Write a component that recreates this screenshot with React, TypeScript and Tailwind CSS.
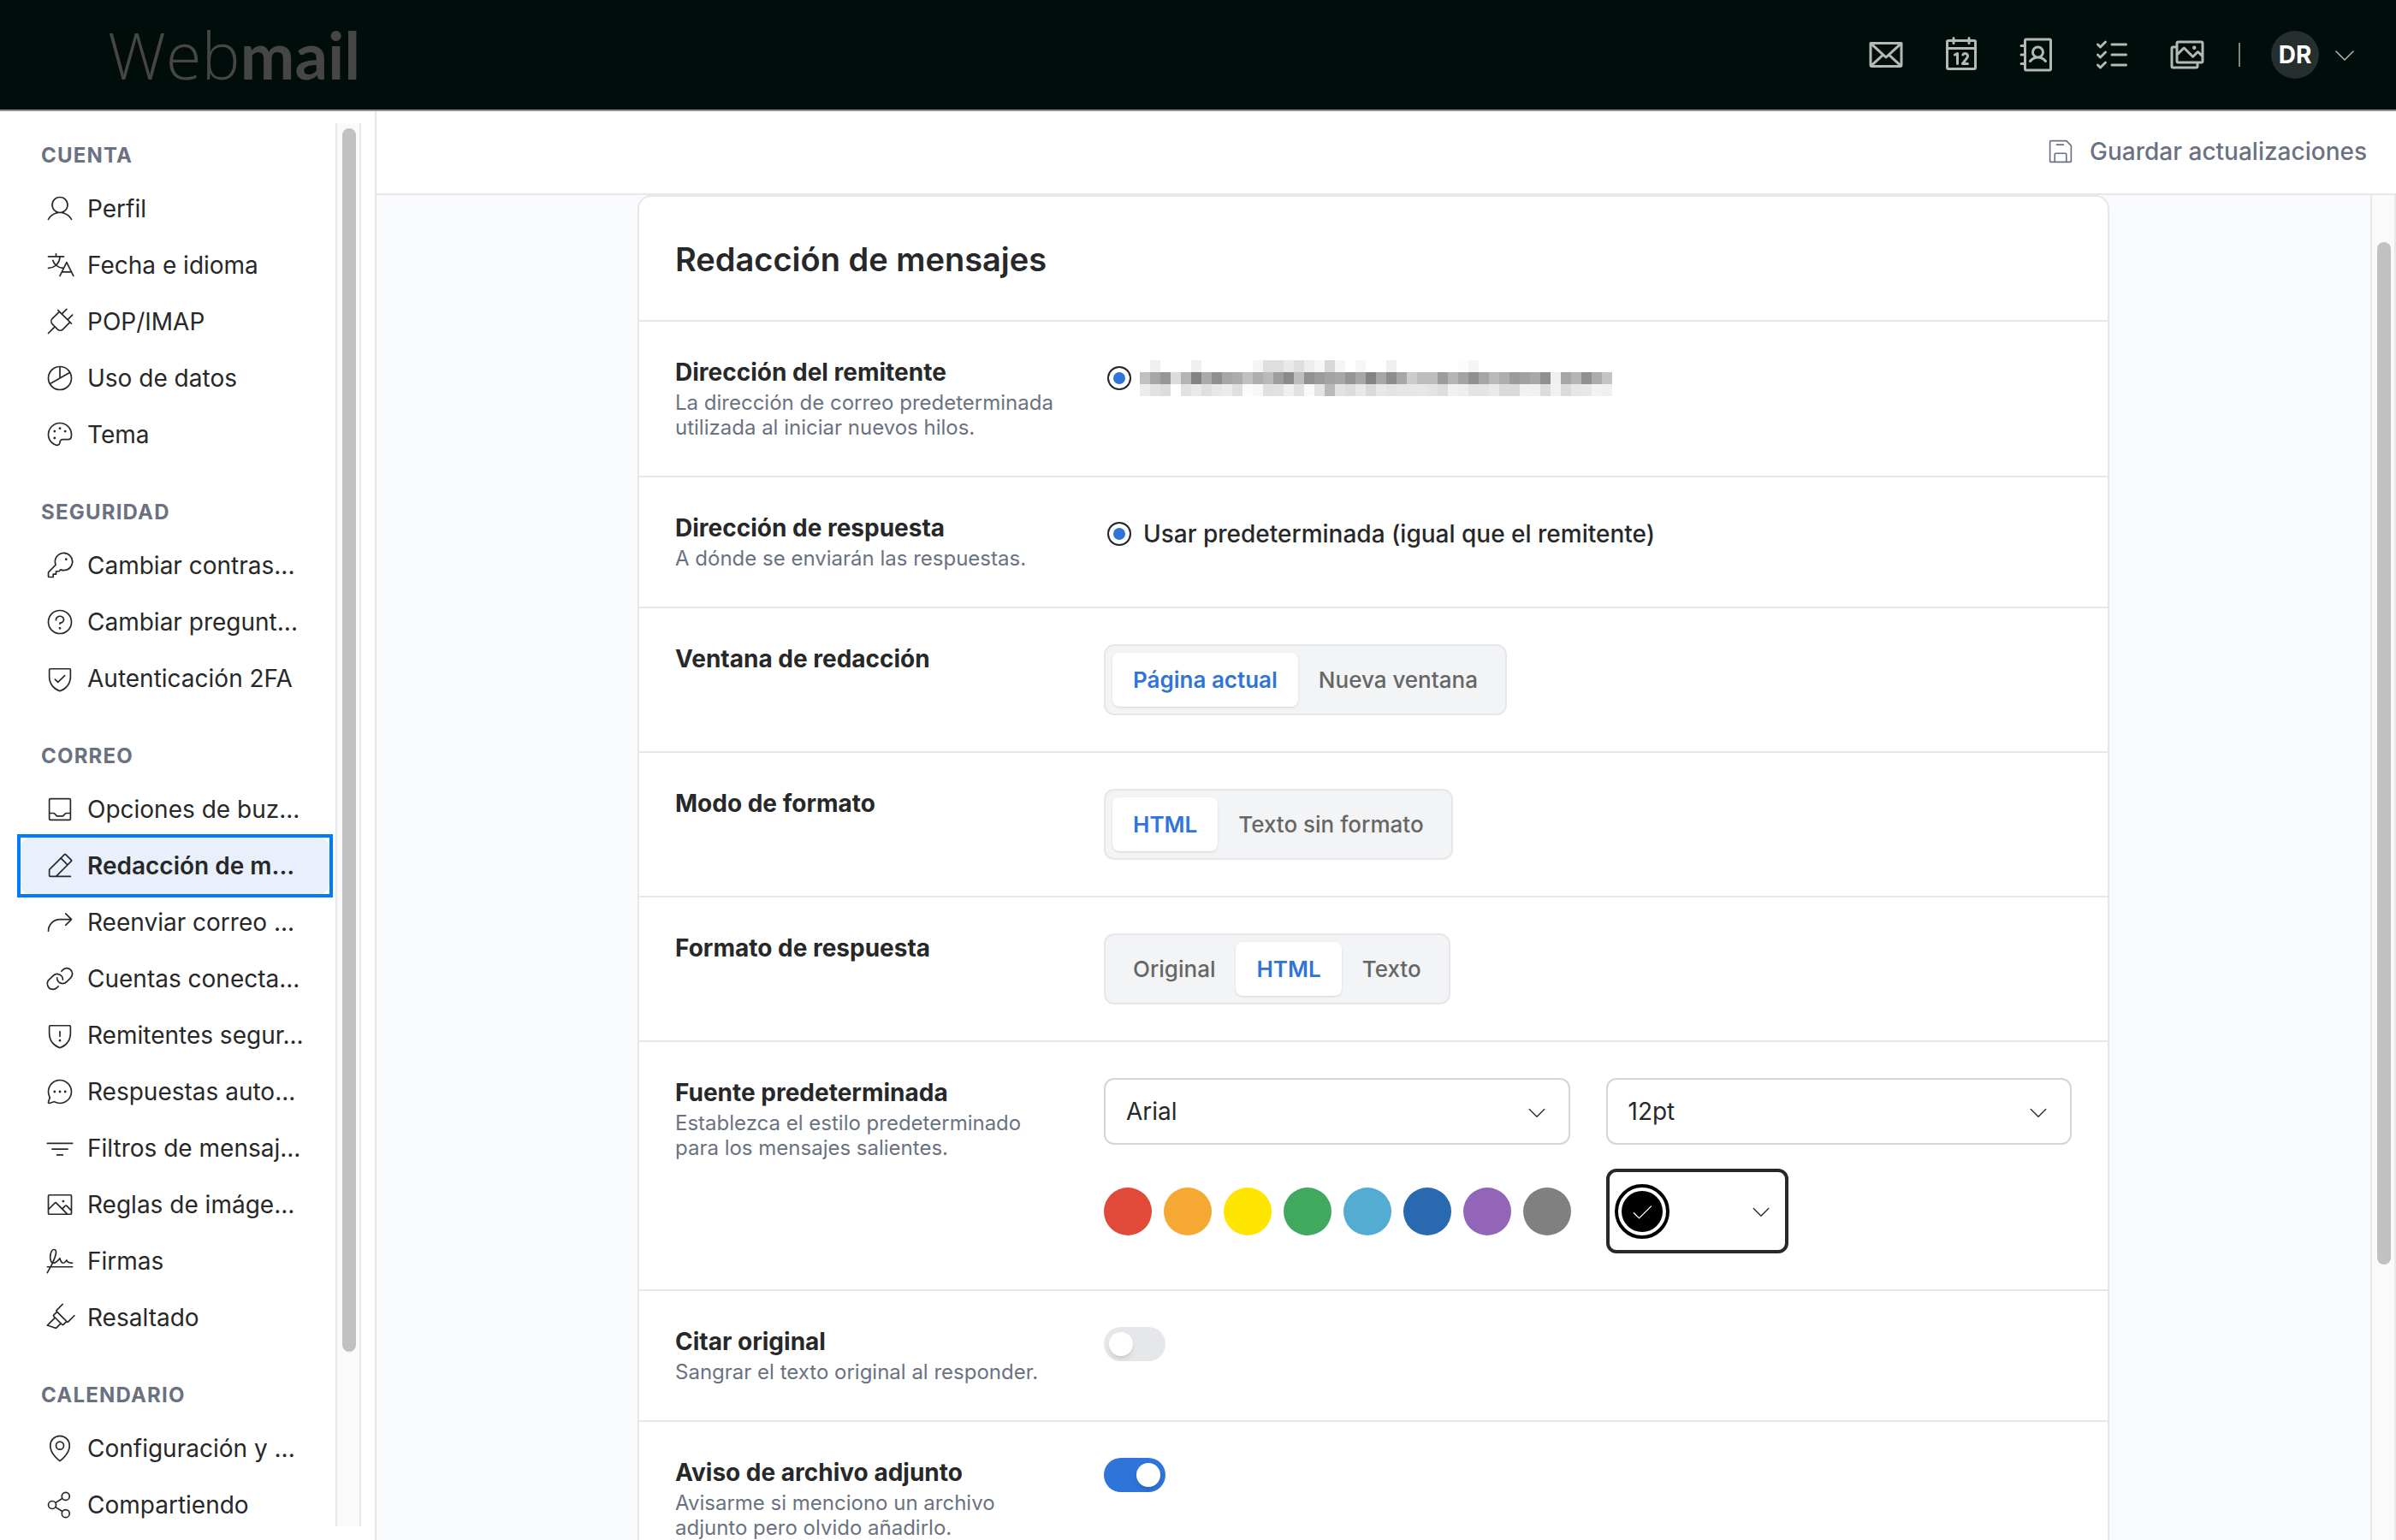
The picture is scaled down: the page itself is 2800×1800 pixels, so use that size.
import React, { useState } from 'react';
import type { IconType } from 'react-icons';
import {
  PiAddressBook,
  PiArrowBendUpRightLight,
  PiCalendar,
  PiCaretDownLight,
  PiChartPieLight,
  PiChatCircleDotsLight,
  PiCheckLight,
  PiEnvelope,
  PiFloppyDiskLight,
  PiFunnelSimpleLight,
  PiHighlighterLight,
  PiImageLight,
  PiImages,
  PiKeyLight,
  PiLinkLight,
  PiListChecks,
  PiMapPinLight,
  PiPaletteLight,
  PiPencilSimpleLineLight,
  PiPlugLight,
  PiQuestionLight,
  PiShareNetworkLight,
  PiShieldCheckLight,
  PiShieldWarningLight,
  PiSignatureLight,
  PiTranslateLight,
  PiTrayLight,
  PiUserLight,
} from 'react-icons/pi';

interface NavItem {
  label: string;
  icon: IconType;
}

const NAV: { title: string; items: NavItem[] }[] = [
  {
    title: 'CUENTA',
    items: [
      { label: 'Perfil', icon: PiUserLight },
      { label: 'Fecha e idioma', icon: PiTranslateLight },
      { label: 'POP/IMAP', icon: PiPlugLight },
      { label: 'Uso de datos', icon: PiChartPieLight },
      { label: 'Tema', icon: PiPaletteLight },
    ],
  },
  {
    title: 'SEGURIDAD',
    items: [
      { label: 'Cambiar contras...', icon: PiKeyLight },
      { label: 'Cambiar pregunt...', icon: PiQuestionLight },
      { label: 'Autenticación 2FA', icon: PiShieldCheckLight },
    ],
  },
  {
    title: 'CORREO',
    items: [
      { label: 'Opciones de buz...', icon: PiTrayLight },
      { label: 'Redacción de m...', icon: PiPencilSimpleLineLight },
      { label: 'Reenviar correo ...', icon: PiArrowBendUpRightLight },
      { label: 'Cuentas conecta...', icon: PiLinkLight },
      { label: 'Remitentes segur...', icon: PiShieldWarningLight },
      { label: 'Respuestas auto...', icon: PiChatCircleDotsLight },
      { label: 'Filtros de mensaj...', icon: PiFunnelSimpleLight },
      { label: 'Reglas de imáge...', icon: PiImageLight },
      { label: 'Firmas', icon: PiSignatureLight },
      { label: 'Resaltado', icon: PiHighlighterLight },
    ],
  },
  {
    title: 'CALENDARIO',
    items: [
      { label: 'Configuración y ...', icon: PiMapPinLight },
      { label: 'Compartiendo', icon: PiShareNetworkLight },
    ],
  },
];

const APPS: NavItem[] = [
  { label: 'Correo', icon: PiEnvelope },
  { label: 'Calendario', icon: PiCalendar },
  { label: 'Contactos', icon: PiAddressBook },
  { label: 'Tareas', icon: PiListChecks },
  { label: 'Galería', icon: PiImages },
];

const SWATCHES = [
  { name: 'Rojo', className: 'bg-[#e14938]' },
  { name: 'Naranja', className: 'bg-[#f5a932]' },
  { name: 'Amarillo', className: 'bg-[#ffe600]' },
  { name: 'Verde', className: 'bg-[#41a85f]' },
  { name: 'Celeste', className: 'bg-[#54acd2]' },
  { name: 'Azul', className: 'bg-[#2969b0]' },
  { name: 'Morado', className: 'bg-[#9365b8]' },
  { name: 'Gris', className: 'bg-[#808080]' },
];

// grey levels of the redacted address, two hex digits per cell
const REDACTED = [
  'fff0fffffff0fffffffffff5dedee9deeef6d8f5fff6fffff0fffffffffffffcf5',
  'c0a696dbb483aa8fa7acc0aeb99d8abd919ca3a695a683a68da6ccbdbd9cb4a390a6b9ad9ba1a88ff0a6b48fabc4',
  'ece2dcffe2e9dfe8ecdffbf8e0e1f0e2fae4b9e2dce8dae8e4e6e6e8e4ddf1eee4e4eadadaf2f1dcf1dbe6e8f2f0',
];

const RedactedAddress = () => (
  <svg width="552" height="42" viewBox="0 0 46 3" preserveAspectRatio="none" shapeRendering="crispEdges" aria-hidden="true">
    {REDACTED.map((row, y) =>
      (row.match(/../g) ?? []).map((v, x) =>
        v === 'ff' ? null : <rect key={`${x}-${y}`} x={x} y={y} width="1" height="1" fill={`#${v}${v}${v}`} />
      )
    )}
  </svg>
);

const Row: React.FC<{ label: string; hint?: string; children: React.ReactNode }> = ({ label, hint, children }) => (
  <section className="flex gap-[42px] border-t-2 border-gray-200 p-[42px]">
    <div className="w-[459px] shrink-0">
      <h2 className="text-[28px] leading-[35px] font-bold">{label}</h2>
      {hint && <p className="mt-[3px] text-[24px] leading-[29px] text-gray-500">{hint}</p>}
    </div>
    <div className="min-w-0 flex-1">{children}</div>
  </section>
);

const Segmented: React.FC<{ label: string; options: string[]; initial: string }> = ({ label, options, initial }) => {
  const [value, setValue] = useState(initial);
  return (
    <div role="group" aria-label={label} className="flex w-fit rounded-xl border-2 border-gray-200 bg-gray-100 p-2">
      {options.map((o) => (
        <button
          key={o}
          type="button"
          aria-pressed={o === value}
          onClick={() => setValue(o)}
          className={
            o === value
              ? 'h-[63px] rounded-lg bg-white px-6 text-[26px] font-semibold text-[#2f74d9] shadow-sm'
              : 'h-[63px] rounded-lg px-6 text-[26px] font-medium text-[#666666]'
          }
        >
          {o}
        </button>
      ))}
    </div>
  );
};

const Radio: React.FC<{ id: string; children: React.ReactNode }> = ({ id, children }) => (
  <div className="flex h-12 items-center pl-1">
    <input
      id={id}
      name={id}
      type="radio"
      defaultChecked
      className="size-7 appearance-none rounded-full border-2 border-[#262626] bg-white checked:bg-[#2f74d9] checked:shadow-[inset_0_0_0_5px_white]"
    />
    <label htmlFor={id} className="text-[28px] leading-9 font-medium">
      {children}
    </label>
  </div>
);

const Select: React.FC<{ label: string; options: string[] }> = ({ label, options }) => (
  <div className="relative">
    <select
      aria-label={label}
      className="h-[78px] w-full appearance-none rounded-xl border-2 border-gray-300 bg-white px-6 text-[28px]"
    >
      {options.map((o) => (
        <option key={o}>{o}</option>
      ))}
    </select>
    <PiCaretDownLight className="pointer-events-none absolute top-[26px] right-[25px] size-7" />
  </div>
);

const Toggle: React.FC<{ label: string; initial: boolean }> = ({ label, initial }) => {
  const [on, setOn] = useState(initial);
  return (
    <button
      type="button"
      role="switch"
      aria-checked={on}
      aria-label={label}
      onClick={() => setOn(!on)}
      className={
        on
          ? 'flex h-10 w-[72px] items-center justify-end rounded-full bg-[#2f74d9] px-1.5'
          : 'flex h-10 w-[72px] items-center rounded-full bg-gray-200 px-1.5'
      }
    >
      <span className="size-7 rounded-full bg-white shadow-md" />
    </button>
  );
};

const Header = () => (
  <header className="flex h-[130px] shrink-0 items-center justify-between border-b-2 border-[#8b908e] bg-[#000d0a] pr-11 pl-[126px]">
    <a href="#" className="font-['Open_Sans',sans-serif] text-[76px] leading-none font-light text-[#464646]">
      Web<span className="font-[Lato,sans-serif] font-bold">mail</span>
    </a>
    <div className="flex items-center">
      <nav className="flex gap-10 text-[#b4b8b7]">
        {APPS.map(({ label, icon: Icon }) => (
          <a key={label} href="#" aria-label={label}>
            <Icon className="size-12" />
          </a>
        ))}
      </nav>
      <span className="mx-9 h-7 w-0.5 bg-[#7f8684]" />
      <button type="button" aria-label="Menú de usuario" className="flex items-center gap-3.5">
        <span className="flex size-14 items-center justify-center rounded-full bg-[#262f2d] text-[28px] font-bold text-white">
          DR
        </span>
        <PiCaretDownLight className="size-8 text-[#b4b8b7]" />
      </button>
    </div>
  </header>
);

const Sidebar = () => {
  const [active, setActive] = useState('Redacción de m...');
  return (
    <aside className="flex w-[440px] shrink-0 border-r-2 border-gray-200 pt-3.5 pr-4 pb-4">
      <nav className="min-w-0 flex-1 overflow-hidden pt-[7px] pr-[7px] pl-6">
        {NAV.map(({ title, items }) => (
          <div key={title} className="mb-[27px]">
            <h3 className="flex h-[60px] items-center pt-0.5 pl-6 text-[24px] font-bold tracking-wider text-gray-500">
              {title}
            </h3>
            {items.map(({ label, icon: Icon }) => (
              <div key={label} className={label === active ? 'outline-4 outline-[#007aff]' : undefined}>
                <a
                  href="#"
                  onClick={() => setActive(label)}
                  className={
                    label === active
                      ? 'flex h-[66px] items-center gap-[14px] rounded-xl bg-[#e9f0fb] pl-7 text-[28px] font-semibold whitespace-nowrap'
                      : 'flex h-[66px] items-center gap-[14px] rounded-xl pl-7 text-[28px] whitespace-nowrap'
                  }
                >
                  <Icon className="size-9 shrink-0" />
                  {label}
                </a>
              </div>
            ))}
          </div>
        ))}
      </nav>
      <div className="w-[30px] border-x-2 border-[#e8e8e8] bg-[#fafafa] pt-1.5">
        <div className="ml-1.5 h-[87.5%] w-4 rounded-full bg-[#c1c1c1]" />
      </div>
    </aside>
  );
};

export default function App() {
  return (
    <div className="flex h-screen flex-col overflow-hidden bg-white font-['Inter',sans-serif] text-[#262829]">
      <Header />
      <div className="flex min-h-0 flex-1">
        <Sidebar />
        <main className="flex min-w-0 flex-1 flex-col">
          <div className="flex h-[98px] shrink-0 items-center justify-end border-b-2 border-gray-200 pr-[34px] pb-0.5">
            <button type="button" className="flex items-center gap-4 text-[28px] font-medium text-gray-500">
              <PiFloppyDiskLight className="size-9" />
              Guardar actualizaciones
            </button>
          </div>

          <div className="flex min-h-0 flex-1 bg-slate-50">
            <div className="min-w-0 flex-1 overflow-hidden">
              <div className="mx-auto max-w-[1720px] rounded-2xl border-2 border-gray-200 bg-white">
                <h1 className="flex h-36 items-center px-[42px] pt-0.5 text-[38px] font-semibold">Redacción de mensajes</h1>

                <Row label="Dirección del remitente" hint="La dirección de correo predeterminada utilizada al iniciar nuevos hilos.">
                  <Radio id="sender">
                    <span className="block pl-[10px]">
                      <RedactedAddress />
                    </span>
                  </Radio>
                </Row>

                <Row label="Dirección de respuesta" hint="A dónde se enviarán las respuestas.">
                  <Radio id="reply-to">
                    <span className="pl-[14px]">Usar predeterminada (igual que el remitente)</span>
                  </Radio>
                </Row>

                <Row label="Ventana de redacción">
                  <Segmented label="Ventana de redacción" options={['Página actual', 'Nueva ventana']} initial="Página actual" />
                </Row>

                <Row label="Modo de formato">
                  <Segmented label="Modo de formato" options={['HTML', 'Texto sin formato']} initial="HTML" />
                </Row>

                <Row label="Formato de respuesta">
                  <Segmented label="Formato de respuesta" options={['Original', 'HTML', 'Texto']} initial="HTML" />
                </Row>

                <Row label="Fuente predeterminada" hint="Establezca el estilo predeterminado para los mensajes salientes.">
                  <div className="grid grid-cols-2 items-center gap-x-[42px] gap-y-7">
                    <Select label="Fuente" options={['Arial']} />
                    <Select label="Tamaño" options={['12pt']} />
                    <div className="flex gap-3.5">
                      {SWATCHES.map((s) => (
                        <button
                          key={s.name}
                          type="button"
                          aria-label={s.name}
                          className={`size-14 shrink-0 rounded-full ${s.className}`}
                        />
                      ))}
                    </div>
                    <button
                      type="button"
                      aria-label="Negro"
                      className="flex h-[99px] w-[213px] items-center justify-between rounded-xl border-4 border-[#262829] pr-3.5 pl-1.5"
                    >
                      <span className="flex size-16 items-center justify-center rounded-full border-4 border-black bg-white">
                        <span className="flex size-12 items-center justify-center rounded-full bg-black text-white">
                          <PiCheckLight className="size-7" />
                        </span>
                      </span>
                      <PiCaretDownLight className="size-7" />
                    </button>
                  </div>
                </Row>

                <Row label="Citar original" hint="Sangrar el texto original al responder.">
                  <Toggle label="Citar original" initial={false} />
                </Row>

                <Row label="Aviso de archivo adjunto" hint="Avisarme si menciono un archivo adjunto pero olvido añadirlo.">
                  <Toggle label="Aviso de archivo adjunto" initial />
                </Row>
              </div>
            </div>
            <div className="w-[30px] border-x-2 border-[#e8e8e8] bg-[#fafafa]">
              <div className="mt-[55px] ml-1.5 h-[76%] w-4 rounded-full bg-[#c1c1c1]" />
            </div>
          </div>
        </main>
      </div>
    </div>
  );
}
